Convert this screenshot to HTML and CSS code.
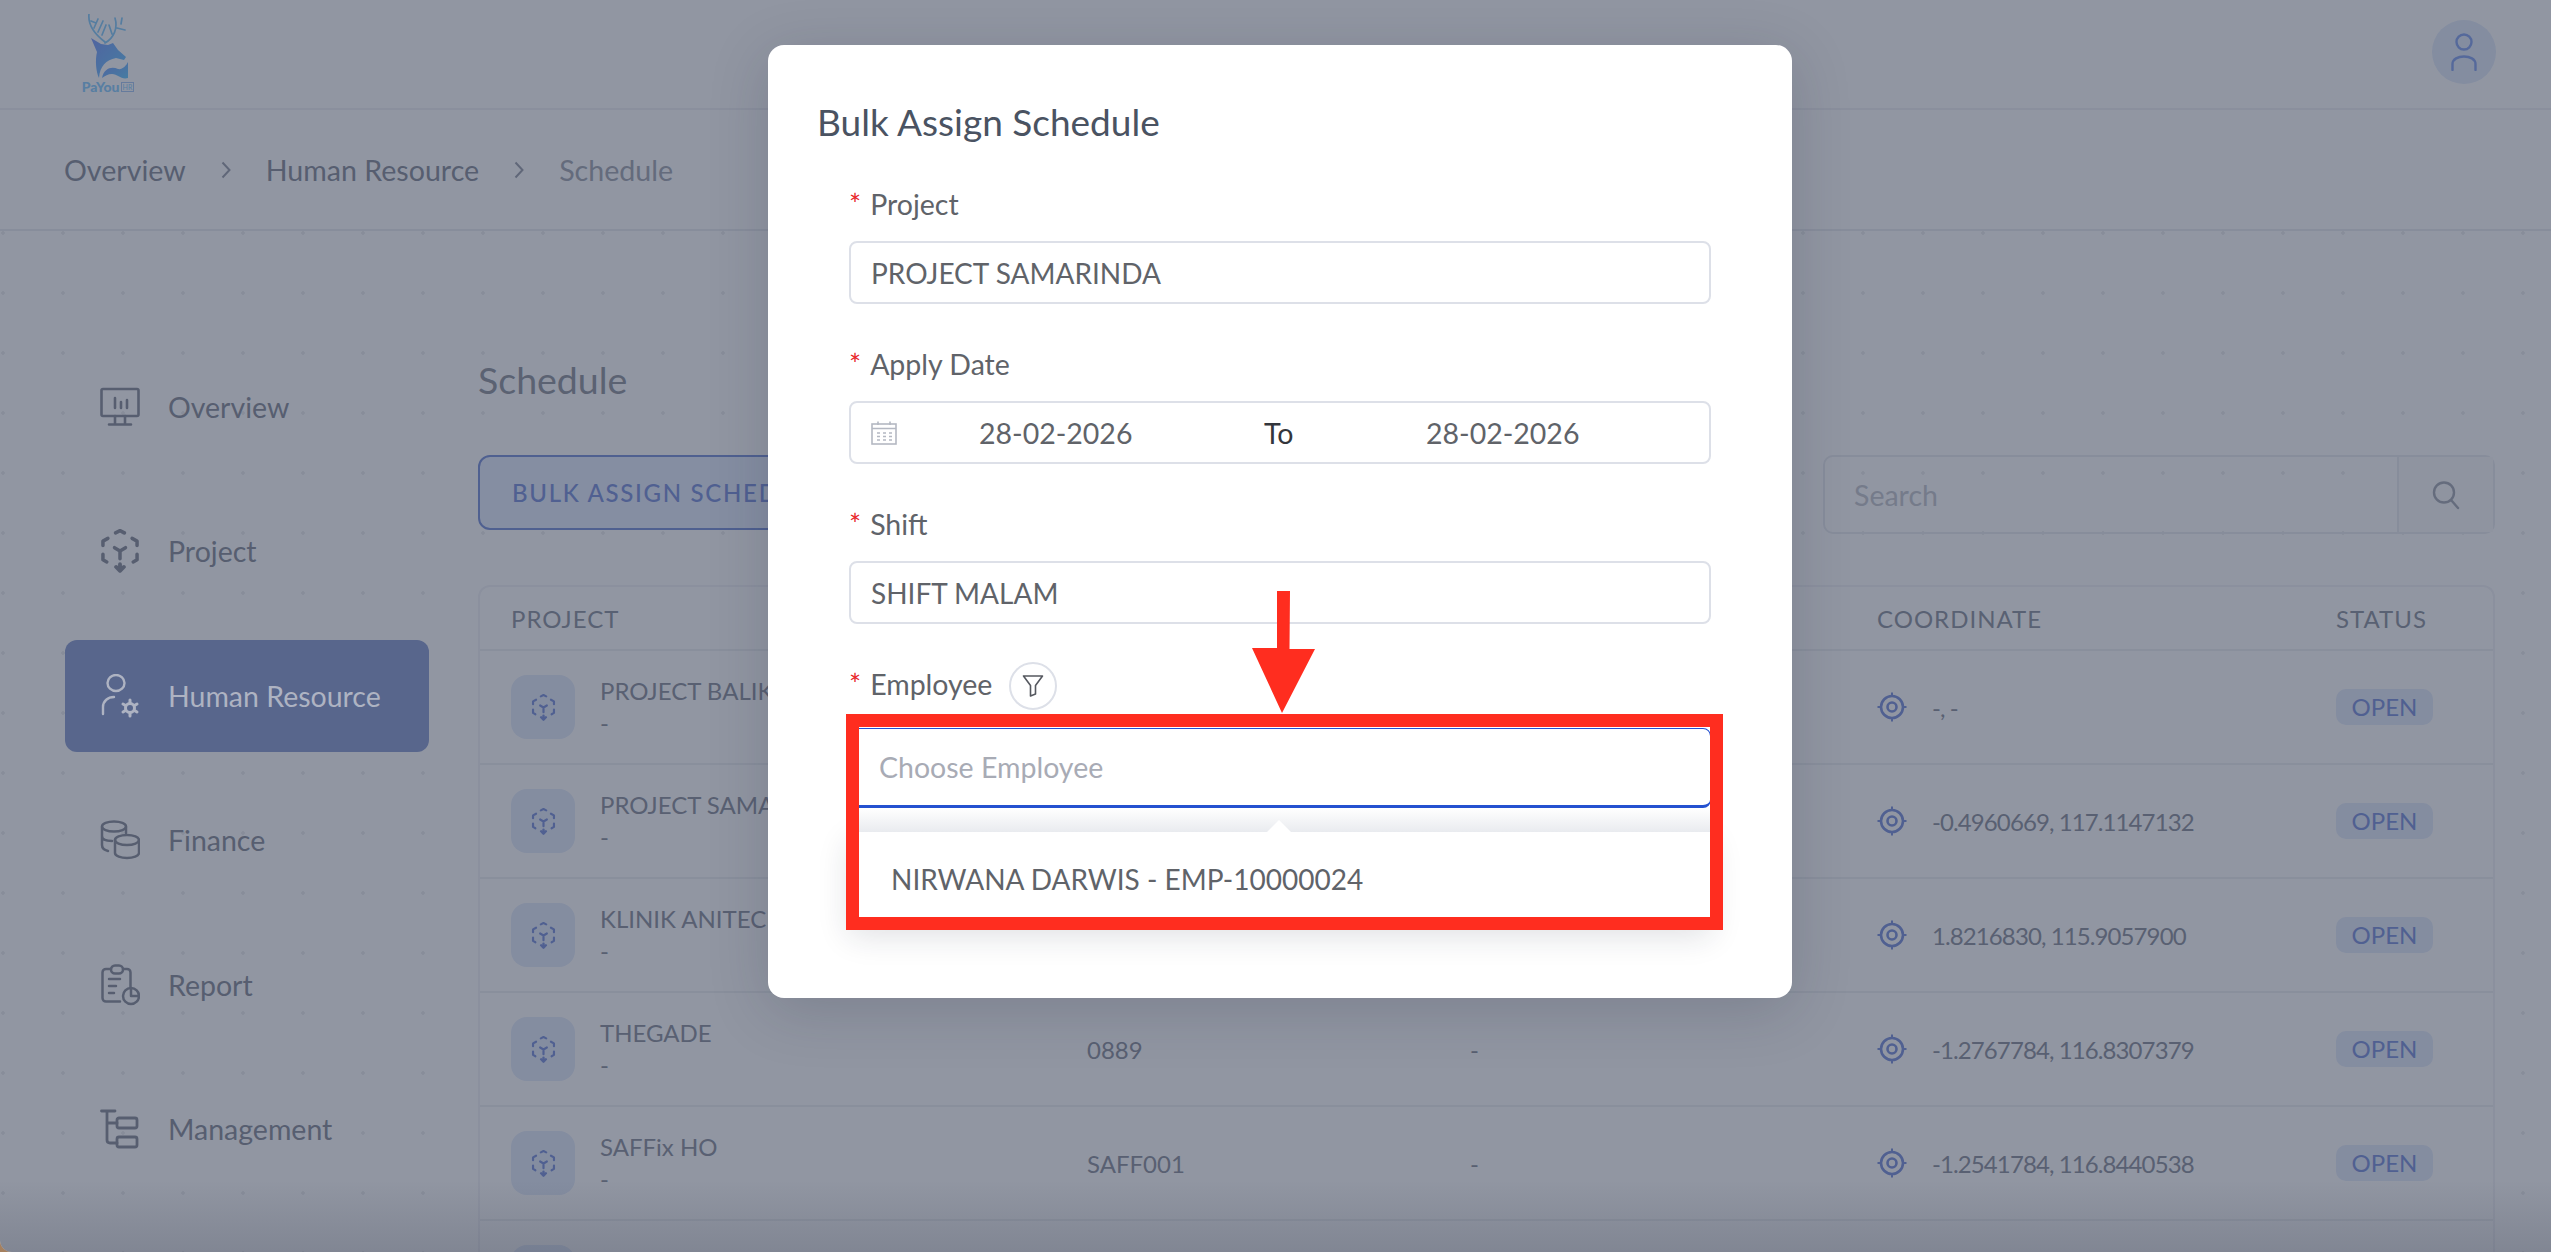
FILE: index.html
```html
<!DOCTYPE html>
<html lang="en">
<head>
    <meta charset="UTF-8">
    <title>Schedule | PaYou HR</title>
    <link rel="stylesheet" href="styles.css">
</head>
<body>
    <svg class="sprite" width="0" height="0">
        <defs>
            <linearGradient id="logo-fill" x1="0" y1="0" x2="1" y2="1">
                <stop offset="0" stop-color="#7c9afa"/>
                <stop offset="1" stop-color="#68ccff"/>
            </linearGradient>
            <symbol id="ico-project" viewBox="0 0 36 40" fill="none" stroke="currentColor" stroke-width="3.200" stroke-linecap="round" stroke-linejoin="round">
                <path d="M14 3.500 18 1.500 22 3.500"/>
                <path d="M7 8.500 2.500 11V15"/>
                <path d="M29 8.500 33.500 11V15"/>
                <path d="M2.500 23V28L6 30"/>
                <path d="M33.500 23V28L30 30"/>
                <path d="M13 17 18 20 23 17M18 20V27"/>
                <path d="M18 32V37M14.500 34.500 18 38 21.500 34.500" stroke-width="3.500"/>
            </symbol>
            <symbol id="ico-target" viewBox="0 0 30 30" fill="none" stroke="currentColor" stroke-width="2.600">
                <circle cx="15" cy="15" r="11"/>
                <circle cx="15" cy="15" r="4.500"/>
                <path d="M15 0.500V4M15 26V29.500M0.500 15H4M26 15H29.500" stroke-width="2"/>
            </symbol>
        </defs>
    </svg>

    <div class="app">
        <header class="topbar">
            <div class="logo">
                <svg width="40" height="66" viewBox="0 0 40 66">
                    <g fill="none" stroke="#86ccfa" stroke-width="1.700" stroke-linecap="round">
                        <path d="M1 0C0 9 5 19 17 28"/>
                        <path d="M3 7 8 9M6 14 10 5M10 18 15 7M14 21 18 11"/>
                        <path d="M17 29C26 24 30 14 27 4M24 20 21 11M29 14 37 16M33 10 34 4"/>
                    </g>
                    <path d="M3 24 13 30 20 31 25 29 30 36 38 43 36 46 28 44C18 46 12 52 11 64 8 58 7 46 9 38Z" fill="url(#logo-fill)"/>
                    <path d="M14 64C16 54 24 52 30 55 34 56 38 52 40 48V64C33 66 30 60 24 60 20 60 17 62 14 64Z" fill="url(#logo-fill)"/>
                </svg>
                <span class="logo-text">PaYou<span class="logo-hr">HR</span></span>
            </div>
            <div class="avatar">
                <svg width="26" height="38" viewBox="0 0 26 38" fill="none" stroke="#86a4f0" stroke-width="2.400" stroke-linecap="round">
                    <circle cx="13" cy="9" r="7.500"/>
                    <path d="M1.500 37V31C1.500 21 24.500 21 24.500 31V37"/>
                </svg>
            </div>
        </header>

        <nav class="breadcrumb">
            <span>Overview</span>
            <svg class="crumb-sep" width="10" height="18" viewBox="0 0 10 18"><path d="M1.500 1.500 8.500 9 1.500 16.500"/></svg>
            <span>Human Resource</span>
            <svg class="crumb-sep" width="10" height="18" viewBox="0 0 10 18"><path d="M1.500 1.500 8.500 9 1.500 16.500"/></svg>
            <span class="crumb-current">Schedule</span>
        </nav>

        <div class="content">
            <aside class="sidebar">
                <a class="side-item">
                    <svg class="side-icon" viewBox="0 0 40 40" fill="none" stroke="currentColor" stroke-width="2.600" stroke-linecap="round" stroke-linejoin="round">
                        <rect x="1.500" y="2" width="37" height="27" rx="1.500"/>
                        <path d="M15 11V21M21 15V21M27 13V21"/>
                        <path d="M15 29V37M25 29V37M9 37.500H31"/>
                    </svg>
                    <span>Overview</span>
                </a>
                <a class="side-item">
                    <svg class="side-icon" viewBox="0 0 36 40"><use href="#ico-project"/></svg>
                    <span>Project</span>
                </a>
                <a class="side-item side-item-active">
                    <svg class="side-icon" viewBox="0 0 40 44" fill="none" stroke="currentColor" stroke-width="2.400" stroke-linecap="round">
                        <ellipse cx="16" cy="9" rx="8.500" ry="8"/>
                        <path d="M3 40V33C3 27 8 23 14 23"/>
                        <circle cx="30" cy="34" r="4.500" stroke-width="3"/>
                        <path d="M30 26V29M30 39V42M23 30 25.500 31.500M37 30 34.500 31.500M23 38 25.500 36.500M37 38 34.500 36.500" stroke-width="3"/>
                    </svg>
                    <span>Human Resource</span>
                </a>
                <a class="side-item">
                    <svg class="side-icon" viewBox="0 0 40 40" fill="none" stroke="currentColor" stroke-width="2.500" stroke-linecap="round">
                        <ellipse cx="14" cy="6.500" rx="12" ry="5"/>
                        <path d="M2 7V25C2 28 4 30 8 31M26 7V13M2 16C2 19 5 21 12 21"/>
                        <ellipse cx="27" cy="20" rx="12" ry="5"/>
                        <path d="M15 20V33C15 36 21 38 27 38S39 36 39 33V20"/>
                    </svg>
                    <span>Finance</span>
                </a>
                <a class="side-item">
                    <svg class="side-icon" viewBox="0 0 40 42" fill="none" stroke="currentColor" stroke-width="2.500" stroke-linecap="round" stroke-linejoin="round">
                        <rect x="11" y="1.500" width="12" height="8" rx="4"/>
                        <path d="M11 5H6C4 5 2.500 6.500 2.500 8.500V34C2.500 36 4 37.500 6 37.500H20M23 5H27C29 5 30.500 6.500 30.500 8.500V23"/>
                        <path d="M9 15H20M9 22H16M9 29H14"/>
                        <circle cx="31" cy="32" r="8"/>
                        <path d="M31 25V32H38"/>
                    </svg>
                    <span>Report</span>
                </a>
                <a class="side-item">
                    <svg class="side-icon" viewBox="0 0 40 40" fill="none" stroke="currentColor" stroke-width="2.800" stroke-linecap="round" stroke-linejoin="round">
                        <path d="M1.500 2H15M7 2V31C7 33 8 34 10 34H17M7 14H17"/>
                        <rect x="17" y="9" width="20" height="10" rx="2"/>
                        <rect x="17" y="28" width="20" height="10" rx="2"/>
                    </svg>
                    <span>Management</span>
                </a>
            </aside>

            <main class="main">
                <h1 class="page-title">Schedule</h1>

                <div class="toolbar">
                    <button class="btn-outline">BULK ASSIGN SCHEDULE</button>
                    <div class="search">
                        <span class="search-input">Search</span>
                        <span class="search-btn">
                            <svg width="28" height="30" viewBox="0 0 28 30" fill="none" stroke="currentColor" stroke-width="2.400" stroke-linecap="round">
                                <circle cx="12" cy="12.500" r="10"/>
                                <path d="M19.500 20.500 26 28"/>
                            </svg>
                        </span>
                    </div>
                </div>

                <div class="table">
                    <div class="table-head">
                        <span>PROJECT</span>
                        <span>CODE</span>
                        <span>ADDRESS</span>
                        <span>COORDINATE</span>
                        <span>STATUS</span>
                    </div>
                    <div class="table-row">
                        <div class="cell-project">
                            <span class="project-icon"><svg width="25" height="27"><use href="#ico-project"/></svg></span>
                            <div><p class="project-name">PROJECT BALIKPAPAN</p><p class="project-sub">-</p></div>
                        </div>
                        <span>-</span>
                        <span>-</span>
                        <div class="cell-coord"><svg class="target" width="30" height="30"><use href="#ico-target"/></svg><span>-, -</span></div>
                        <div><span class="badge">OPEN</span></div>
                    </div>
                    <div class="table-row">
                        <div class="cell-project">
                            <span class="project-icon"><svg width="25" height="27"><use href="#ico-project"/></svg></span>
                            <div><p class="project-name">PROJECT SAMARINDA</p><p class="project-sub">-</p></div>
                        </div>
                        <span>-</span>
                        <span>-</span>
                        <div class="cell-coord"><svg class="target" width="30" height="30"><use href="#ico-target"/></svg><span>-0.4960669, 117.1147132</span></div>
                        <div><span class="badge">OPEN</span></div>
                    </div>
                    <div class="table-row">
                        <div class="cell-project">
                            <span class="project-icon"><svg width="25" height="27"><use href="#ico-project"/></svg></span>
                            <div><p class="project-name">KLINIK ANITECH</p><p class="project-sub">-</p></div>
                        </div>
                        <span>-</span>
                        <span>-</span>
                        <div class="cell-coord"><svg class="target" width="30" height="30"><use href="#ico-target"/></svg><span>1.8216830, 115.9057900</span></div>
                        <div><span class="badge">OPEN</span></div>
                    </div>
                    <div class="table-row">
                        <div class="cell-project">
                            <span class="project-icon"><svg width="25" height="27"><use href="#ico-project"/></svg></span>
                            <div><p class="project-name">THEGADE</p><p class="project-sub">-</p></div>
                        </div>
                        <span>0889</span>
                        <span>-</span>
                        <div class="cell-coord"><svg class="target" width="30" height="30"><use href="#ico-target"/></svg><span>-1.2767784, 116.8307379</span></div>
                        <div><span class="badge">OPEN</span></div>
                    </div>
                    <div class="table-row">
                        <div class="cell-project">
                            <span class="project-icon"><svg width="25" height="27"><use href="#ico-project"/></svg></span>
                            <div><p class="project-name">SAFFix HO</p><p class="project-sub">-</p></div>
                        </div>
                        <span>SAFF001</span>
                        <span>-</span>
                        <div class="cell-coord"><svg class="target" width="30" height="30"><use href="#ico-target"/></svg><span>-1.2541784, 116.8440538</span></div>
                        <div><span class="badge">OPEN</span></div>
                    </div>
                    <div class="table-row">
                        <div class="cell-project">
                            <span class="project-icon"><svg width="25" height="27"><use href="#ico-project"/></svg></span>
                        </div>
                    </div>
                </div>
            </main>
        </div>

        <div class="overlay"></div>

        <div class="modal">
            <h2 class="modal-title">Bulk Assign Schedule</h2>
            <form class="modal-form">
                <div class="field">
                    <label class="field-label">Project</label>
                    <div class="input input-upper">PROJECT SAMARINDA</div>
                </div>
                <div class="field">
                    <label class="field-label">Apply Date</label>
                    <div class="input input-range">
                        <svg class="cal-icon" width="26" height="24" viewBox="0 0 26 24" fill="none" stroke="#b4b8c2" stroke-width="1.600">
                            <rect x="1" y="3" width="24" height="20"/>
                            <path d="M1 7.500H25M7 0.500V4M19 0.500V4"/>
                            <path d="M6 12H9M12 12H15M18 12H21M6 15.500H9M12 15.500H15M18 15.500H21M6 19H9M12 19H15M18 19H21" stroke-width="1.500"/>
                        </svg>
                        <span class="range-date">28-02-2026</span>
                        <span class="range-to">To</span>
                        <span class="range-date">28-02-2026</span>
                    </div>
                </div>
                <div class="field">
                    <label class="field-label">Shift</label>
                    <div class="input input-upper">SHIFT MALAM</div>
                </div>
                <div class="field field-employee">
                    <div class="label-row">
                        <label class="field-label">Employee</label>
                        <span class="filter-btn">
                            <svg width="22" height="24" viewBox="0 0 22 24" fill="none" stroke="#55585f" stroke-width="1.600" stroke-linejoin="round">
                                <path d="M1.500 2H20.500L13.500 11.500V20L8.500 22V11.500Z"/>
                            </svg>
                        </span>
                    </div>
                    <div class="select-focus">Choose Employee</div>
                    <div class="select-arrow-gap"></div>
                    <div class="select-drop">NIRWANA DARWIS - EMP-10000024</div>
                </div>
            </form>

            <!-- red annotation on top of the screenshot -->
            <div class="mark-box"></div>
            <svg class="mark-arrow" width="66" height="124" viewBox="0 0 66 124">
                <path d="M27 1H40L39.500 59H65L32 123 2 58H27Z" fill="#ff2d1f"/>
            </svg>
        </div>
    </div>
</body>
</html>
```

FILE: styles.css
```css
/* base */
* {
    box-sizing: border-box;
}

html,
body {
    margin: 0;
    height: 100%;
    overflow: hidden;
}

body {
    font-family: Lato, "Liberation Sans", sans-serif;
    font-size: 28.500px;
    color: #8e929e;
    background-color: #a5805f;
}

p {
    margin: 0;
}

.sprite {
    position: absolute;
}

.app {
    position: relative;
    height: 1252px;
    overflow: hidden;
    background-color: #fff;
    border-bottom-left-radius: 12px;
}

/* top bar */
.topbar {
    height: 110px;
    padding: 14px 55px 0 83px;
    display: flex;
    justify-content: space-between;
    border-bottom: 2px solid #f0f1f4;
}

.logo {
    width: 50px;
    display: flex;
    flex-direction: column;
    align-items: center;
}

.logo-text {
    margin-top: 1px;
    font-size: 14px;
    line-height: 12px;
    font-weight: 900;
    color: #8ccfff;
    white-space: nowrap;
}

.logo-hr {
    font-size: 7px;
    font-weight: 400;
    margin-left: 1px;
    padding: 0 1px;
    border: 1px solid #a8c8f5;
    vertical-align: 2px;
}

.avatar {
    width: 64px;
    height: 64px;
    margin-top: 6px;
    border-radius: 50%;
    background-color: #e4ecfb;
    display: flex;
    align-items: center;
    justify-content: center;
}

/* breadcrumb */
.breadcrumb {
    height: 121px;
    padding-left: 64px;
    display: flex;
    align-items: center;
    font-size: 28.600px;
    border-bottom: 2px solid #ebecf0;
    color: #8a8f9b;
}

.crumb-sep {
    margin: 0 35px 0 35px;
    fill: none;
    stroke: #9da1ac;
    stroke-width: 2;
}

.crumb-current {
    color: #a4a8b2;
}

/* page area */
.content {
    height: 1021px;
    padding: 120px 56px 0 65px;
    display: flex;
    gap: 49px;
    background-image: radial-gradient(circle, #ecedef 1.500px, transparent 2px);
    background-size: 60px 60px;
    background-position: 33px -28px;
}

.sidebar {
    width: 364px;
    flex-shrink: 0;
    display: flex;
    flex-direction: column;
    gap: 32.400px;
}

.side-item {
    height: 112px;
    padding-left: 35px;
    display: flex;
    align-items: center;
    gap: 28px;
    border-radius: 12px;
    color: #8a8f9b;
}

.side-icon {
    width: 40px;
    height: 44px;
    flex-shrink: 0;
}

.side-item-active {
    background-color: #8c9ed2;
}

/* the active entry stays light above the dim layer */
.side-item-active svg,
.side-item-active span {
    position: relative;
    z-index: 1;
    color: #aeb3c2;
}

.main {
    flex: 1;
    padding-top: 7px;
}

.page-title {
    margin: 0 0 53px;
    font-size: 37.500px;
    line-height: 44px;
    font-weight: 400;
    color: #92969f;
}

.toolbar {
    display: flex;
    justify-content: space-between;
    align-items: flex-start;
}

.btn-outline {
    height: 75px;
    width: 400px;
    padding: 0 32px;
    font-family: inherit;
    font-size: 24px;
    font-weight: 500;
    letter-spacing: 1.700px;
    text-align: left;
    color: #7c92dc;
    background-color: #e6eeff;
    border: 2px solid #7b92db;
    border-radius: 12px;
}

.search {
    width: 672px;
    height: 79px;
    display: flex;
    border: 2px solid #ebecf0;
    border-radius: 10px;
}

.search-input {
    flex: 1;
    padding-left: 29px;
    display: flex;
    align-items: center;
    color: #c6c8cf;
}

.search-btn {
    width: 96px;
    display: flex;
    align-items: center;
    justify-content: center;
    color: #a7abb4;
    background-color: #fafafb;
    border-left: 2px solid #ebecf0;
}

/* table */
.table {
    margin-top: 51px;
    background-color: #fff;
    border: 2px solid #f2f3f6;
    border-bottom: 0;
    border-radius: 12px 12px 0 0;
    font-size: 24px;
}

.table-head,
.table-row {
    padding-left: 31px;
    display: grid;
    grid-template-columns: 576px 383px 407px 459px 1fr;
    align-items: center;
}

.table-head {
    height: 62px;
    letter-spacing: 1px;
    color: #8f94a0;
}

.table-row {
    height: 114px;
    border-top: 2px solid #eff0f3;
}

.cell-project {
    display: flex;
    align-items: center;
    gap: 25px;
}

.project-icon {
    width: 64px;
    height: 64px;
    border-radius: 16px;
    background-color: #e4ecfb;
    color: #7c92dc;
    display: flex;
    align-items: center;
    justify-content: center;
}

.project-name,
.project-sub {
    line-height: 32px;
}

.cell-coord {
    display: flex;
    align-items: center;
    gap: 25px;
    letter-spacing: -0.900px;
}

.target {
    color: #7c92dc;
}

.badge {
    display: inline-block;
    width: 97px;
    height: 36px;
    font-size: 24px;
    line-height: 36px;
    text-align: center;
    color: #7c92dc;
    background-color: #e4ecfb;
    border-radius: 10px;
}

/* overlay and modal */
.overlay {
    position: absolute;
    inset: 0;
    background: linear-gradient(to bottom, transparent 1180px, rgba(30, 36, 56, 0.14) 1252px), rgba(36, 46, 70, 0.5);
}

.modal {
    position: absolute;
    top: 45px;
    left: 768px;
    width: 1024px;
    height: 953px;
    padding: 55px 81px 0 49px;
    background-color: #fff;
    border-radius: 16px;
    box-shadow: 0 12px 60px rgba(30, 36, 56, 0.18);
    color: #606369;
}

.modal-title {
    margin: 0 0 42px;
    font-size: 37px;
    line-height: 44px;
    font-weight: 400;
    color: #4a5362;
}

.modal-form {
    margin-left: 32px;
}

.field {
    margin-bottom: 42px;
}

.field-label {
    display: block;
    height: 36px;
    line-height: 36px;
}

.field-label::before {
    content: "*";
    margin-right: 9px;
    color: #e8262a;
}

.input {
    height: 63px;
    margin-top: 19px;
    padding: 0 20px;
    display: flex;
    align-items: center;
    border: 2px solid #dde0e8;
    border-radius: 8px;
}

.input-upper {
    font-size: 28px;
}

.cal-icon {
    flex-shrink: 0;
}

.range-date {
    width: 155px;
    white-space: nowrap;
}

.input-range .range-date:first-of-type {
    margin-left: 82px;
}

.range-to {
    width: 162px;
    margin-left: 130px;
    color: #33363c;
}

.field-employee {
    margin: -4px 0 0;
}

.label-row {
    display: flex;
    align-items: center;
    gap: 17px;
}

.label-row .field-label {
    margin-bottom: 4px;
}

.filter-btn {
    width: 48px;
    height: 48px;
    border: 2px solid #dde0e8;
    border-radius: 50%;
    display: flex;
    align-items: center;
    justify-content: center;
}

.select-focus {
    height: 80px;
    margin-top: 18px;
    padding-left: 29px;
    display: flex;
    align-items: center;
    color: #a8abb5;
    border: 1px solid #2451d0;
    border-bottom: 3px solid #2451d0;
    border-radius: 8px;
}

.select-arrow-gap {
    position: relative;
    height: 24px;
    background: linear-gradient(to bottom, #fff, #e9ebef);
}

.select-arrow-gap::after {
    content: "";
    position: absolute;
    left: 418px;
    bottom: 0;
    border-left: 12px solid transparent;
    border-right: 12px solid transparent;
    border-bottom: 12px solid #fff;
}

.select-drop {
    height: 94px;
    padding-left: 42px;
    display: flex;
    align-items: center;
    font-size: 28px;
    background-color: #fff;
    box-shadow: 0 10px 30px rgba(30, 36, 56, 0.14);
}

.mark-box {
    position: absolute;
    top: 669px;
    left: 78px;
    width: 877px;
    height: 216px;
    border: 13px solid #ff2d1f;
}

.mark-arrow {
    position: absolute;
    top: 545px;
    left: 482px;
}
```
